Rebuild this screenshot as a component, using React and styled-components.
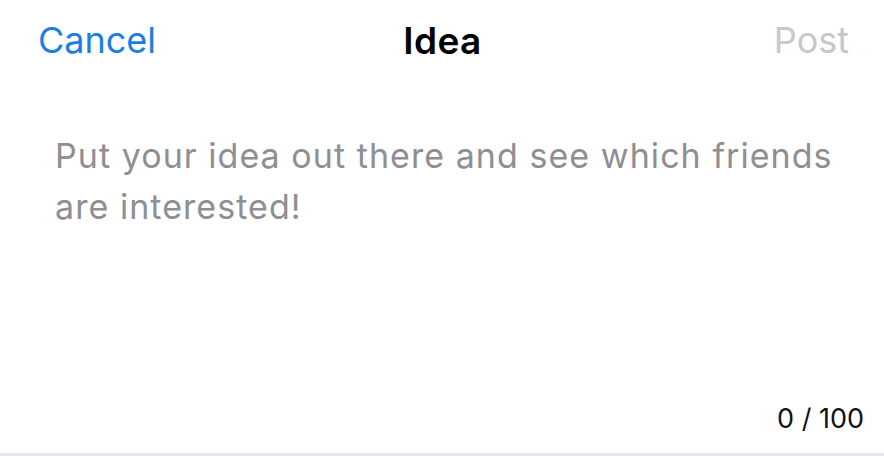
import React, { useState } from 'react';
import styled, { createGlobalStyle } from 'styled-components';

const GlobalStyle = createGlobalStyle`
  html, body {
    margin: 0;
    padding: 0;
    background: #ffffff;
  }
  body {
    font-family: Inter, "Noto Sans", sans-serif;
    -webkit-font-smoothing: antialiased;
  }
`;

const Screen = styled.div`
  width: 884px;
  height: 456px;
  display: flex;
  flex-direction: column;
  box-sizing: border-box;
  border-bottom: 3px solid #e6e6e8;
  background: #fff;
`;

const NavBar = styled.header`
  display: grid;
  grid-template-columns: 1fr auto 1fr;
  align-items: center;
  height: 80px;
  padding: 0 35px 0 38px;
`;

const NavButton = styled.button`
  justify-self: ${ props => props.align };
  border: none;
  background: transparent;
  padding: 0;
  font-family: inherit;
  font-size: 36px;
  font-weight: 400;
  color: ${ props => props.disabled ? '#c7c7cc' : '#1a7ee2' };
  cursor: pointer;
`;

const Title = styled.h1`
  margin: 0 0 0 -2px;
  font-size: 37px;
  font-weight: 600;
  letter-spacing: 0.4px;
  color: #000;
`;

const Body = styled.div`
  flex: 1;
  display: flex;
  flex-direction: column;
  padding: 50px 20px 18px 55px;
`;

const TextArea = styled.textarea`
  flex: 1;
  border: none;
  outline: none;
  resize: none;
  padding: 0;
  font-family: inherit;
  font-size: 34px;
  line-height: 51px;
  letter-spacing: 1.05px;
  color: #000;

  &::placeholder {
    color: #8e8e93;
  }
`;

const Counter = styled.div`
  align-self: flex-end;
  font-size: 27px;
  color: #111;
`;

export default function App() {
    const [ text, setText ] = useState('');

    return (
        <>
            <GlobalStyle/>
            <Screen>
                <NavBar>
                    <NavButton align="start">Cancel</NavButton>
                    <Title>Idea</Title>
                    <NavButton align="end" disabled={ !text.trim() }>Post</NavButton>
                </NavBar>
                <Body>
                    <TextArea
                        value={ text }
                        maxLength={ 100 }
                        placeholder="Put your idea out there and see which friends are interested!"
                        onChange={ e => setText(e.target.value) }
                    />
                    <Counter>{ text.length } / 100</Counter>
                </Body>
            </Screen>
        </>
    );
}
